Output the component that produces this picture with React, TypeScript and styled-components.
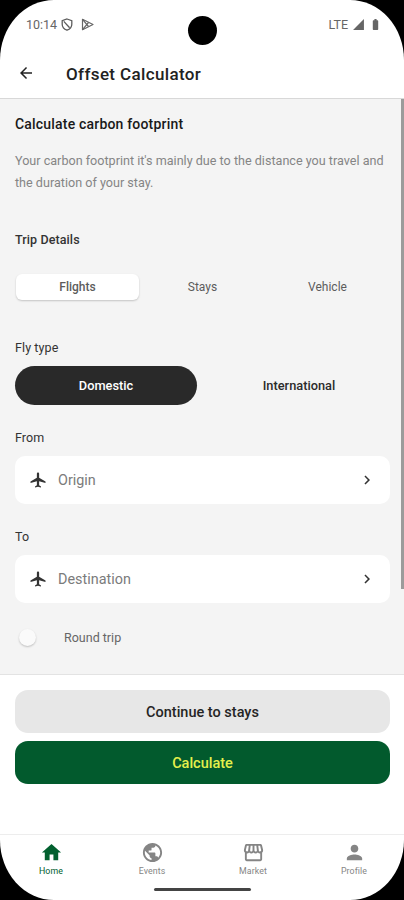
import React from 'react';
import styled, { createGlobalStyle, css } from 'styled-components';
import {
  MdArrowBack,
  MdBatteryFull,
  MdChevronRight,
  MdHome,
  MdLocalAirport,
  MdPerson,
  MdPublic,
  MdSignalCellular4Bar,
} from 'react-icons/md';

const GlobalStyle = createGlobalStyle`
  * { box-sizing: border-box; }
  body { margin: 0; background: #000; font-family: Roboto, "Liberation Sans", sans-serif; }
  button { font-family: inherit; border: 0; padding: 0; background: none; color: inherit; }
  svg { display: block; flex: none; }
`;

const Phone = styled.div`
  position: relative;
  width: 404px;
  height: 900px;
  display: flex;
  flex-direction: column;
  overflow: hidden;
  background: #fff;
  border-radius: 54px / 60px;
`;

const StatusBar = styled.div`
  height: 48px;
  flex: none;
  display: flex;
  justify-content: space-between;
  padding: 17px 22px 0 26px;
  color: #666;
  font-size: 12.5px;
  line-height: 15px;
`;

const StatusGroup = styled.div<{ $gap: number }>`
  display: flex;
  height: 15px;
  align-items: center;
  gap: ${(p) => p.$gap}px;
`;

const Camera = styled.div`
  position: absolute;
  left: 188px;
  top: 16px;
  width: 29px;
  height: 29px;
  border-radius: 50%;
  background: #000;
`;

const Header = styled.header`
  height: 51px;
  flex: none;
  display: flex;
  align-items: center;
  padding: 0 0 0 17px;
  border-bottom: 1px solid #d8d8d8;
  color: #222;
`;

const Title = styled.h1`
  margin: 2px 0 0 31px;
  font-size: 17px;
  font-weight: 500;
  line-height: 20px;
  letter-spacing: 0.36px;
`;

const Content = styled.main`
  position: relative;
  height: 576px;
  flex: none;
  padding: 16px 14px 0 15px;
  background: #f4f4f4;
  border-bottom: 1px solid #e3e3e3;
`;

const ScrollThumb = styled.div`
  position: absolute;
  right: 0;
  top: 0;
  width: 3px;
  height: 490px;
  background: #9b9b9b;
`;

const Heading = styled.h2`
  margin: 0;
  font-size: 14px;
  font-weight: 500;
  line-height: 18px;
  letter-spacing: 0.19px;
  color: #191919;
`;

const Intro = styled.p`
  margin: 17px 0 0;
  font-size: 12.6px;
  line-height: 22px;
  color: #858585;
  white-space: nowrap;
`;

const Label = styled.h3<{ $top: number; $medium?: boolean }>`
  margin: ${(p) => p.$top}px 0 0;
  font-size: 12.5px;
  font-weight: ${(p) => (p.$medium ? 500 : 400)};
  line-height: 16px;
  letter-spacing: 0.1px;
  color: #333;
`;

const Tabs = styled.div`
  display: grid;
  grid-template-columns: repeat(3, 1fr);
  margin-top: 26px;
  height: 26px;
`;

const Tab = styled.button<{ $active?: boolean }>`
  margin: 0 1px;
  font-size: 12px;
  font-weight: ${(p) => (p.$active ? 500 : 400)};
  color: #5c5c5c;
  border-radius: 6px;
  ${(p) =>
    p.$active &&
    css`
      background: #fff;
      box-shadow: 0 1px 2px rgba(0, 0, 0, 0.2);
    `}
`;

const Segments = styled.div`
  display: grid;
  grid-template-columns: 182px 182px;
  justify-content: space-between;
  margin-top: 10px;
  height: 39px;
`;

const Segment = styled.button<{ $active?: boolean }>`
  border-radius: 20px;
  font-size: 12.8px;
  font-weight: 500;
  color: ${(p) => (p.$active ? '#fff' : '#2b2b2b')};
  background: ${(p) => (p.$active ? '#292929' : 'transparent')};
`;

const Picker = styled.div`
  display: flex;
  align-items: center;
  height: 48px;
  margin-top: 10px;
  padding: 0 14px;
  border-radius: 10px;
  background: #fff;
  color: #333;
`;

const Placeholder = styled.span`
  flex: 1;
  margin-left: 11px;
  font-size: 14.4px;
  color: #7b7b7b;
`;

const ToggleRow = styled.div`
  display: flex;
  align-items: center;
  height: 20px;
  margin-top: 24px;
  font-size: 12.5px;
  color: #666;
`;

const Knob = styled.span`
  width: 17px;
  height: 17px;
  margin: 0 28px 0 4px;
  border-radius: 50%;
  background: #fafafa;
  box-shadow: 0 1px 2px rgba(0, 0, 0, 0.22);
`;

const Actions = styled.div`
  flex: 1;
  display: flex;
  flex-direction: column;
  gap: 8px;
  padding: 15px 14px 0 15px;
`;

const Action = styled.button<{ $primary?: boolean }>`
  height: 43px;
  padding-top: 2px;
  border-radius: 13px;
  font-size: 14.5px;
  font-weight: 500;
  color: ${(p) => (p.$primary ? '#e4f04c' : '#252525')};
  background: ${(p) => (p.$primary ? '#025a2d' : '#e7e7e7')};
`;

const NavBar = styled.nav`
  display: grid;
  grid-template-columns: repeat(4, 101px);
  height: 66px;
  flex: none;
  padding-top: 6px;
  border-top: 1px solid #ededed;
`;

const NavItem = styled.div<{ $active?: boolean }>`
  display: flex;
  flex-direction: column;
  align-items: center;
  gap: 2px;
  padding-left: 1px;
  font-size: 8.8px;
  line-height: 11px;
  letter-spacing: 0.1px;
  color: ${(p) => (p.$active ? '#02602f' : '#858585')};
`;

const HomeIndicator = styled.div`
  position: absolute;
  left: 154px;
  top: 888px;
  width: 97px;
  height: 3px;
  border-radius: 2px;
  background: #444;
`;

const ShieldIcon = () => (
  <svg width="12" height="13" viewBox="0 0 12 13" fill="none" stroke="#5c5c5c" strokeWidth="1.3">
    <path d="M6 1 10.8 2.6v3.6c0 3-2 5-4.8 6-2.8-1-4.8-3-4.8-6V2.6Z" />
    <path d="m2.8 3.4 5.8 6.4" />
  </svg>
);

const PlayIcon = () => (
  <svg width="13" height="13" viewBox="0 0 13 13" fill="none" stroke="#666" strokeWidth="1.2" strokeLinejoin="round">
    <path d="M1.5 1.3v10.4L12 6.5Z" />
    <path d="m1.5 1.3 6 7.2M1.5 11.7l6-7.2" />
  </svg>
);

const StorefrontIcon = () => (
  <svg width="23" height="23" viewBox="0 0 24 24" fill="currentColor">
    <path d="M5.06 3C4.63 3 4.22 3.14 3.84 3.42S3.24 4.06 3.14 4.5L2.11 8.91C1.86 10 2.06 10.92 2.69 11.73 2.81 11.85 2.93 11.97 3.04 12.07V19C3.04 20.1 3.94 21 5 21H19C20.1 21 21 20.1 21 19V12.07C21.2 11.92 21.28 11.81 21.34 11.73 21.97 10.92 22.17 10 21.92 8.91L20.86 4.5C20.73 4.06 20.5 3.7 20.13 3.42 19.77 3.14 19.38 3 18.94 3ZM18.89 4.97 19.97 9.38C20.06 9.81 19.97 10.2 19.69 10.55 19.44 10.86 19.13 11 18.75 11 18.44 11 18.17 10.9 17.95 10.66 17.73 10.43 17.61 10.16 17.58 9.84L16.97 5ZM5.06 5H7.03L6.42 9.84C6.3 10.63 5.91 11 5.25 11 4.84 11 4.53 10.86 4.31 10.55 4.03 10.2 3.94 9.81 4.03 9.38ZM9.05 5H11V9.7C11 10.05 10.89 10.35 10.64 10.62 10.39 10.88 10.08 11 9.7 11 9.36 11 9.07 10.88 8.84 10.59S8.5 10 8.5 9.66V9.5ZM13 5H14.95L15.5 9.5C15.58 9.92 15.5 10.27 15.21 10.57 14.95 10.87 14.61 11 14.2 11 13.89 11 13.61 10.88 13.36 10.62 13.11 10.35 13 10.05 13 9.7ZM7.45 12.05C8.08 12.65 8.86 13 9.7 13 10.55 13 11.33 12.65 11.95 12.05 12.58 12.65 13.36 13 14.2 13 15.08 13 15.86 12.65 16.5 12.05 17.11 12.65 17.86 13 18.75 13H19.03V19H5V13H5.25C6.09 13 6.84 12.65 7.45 12.05Z" />
  </svg>
);

export default function App() {
  return (
    <>
      <GlobalStyle />
      <Phone>
        <StatusBar>
          <StatusGroup $gap={8}>
            <StatusGroup $gap={4}>
              <span>10:14</span>
              <ShieldIcon />
            </StatusGroup>
            <PlayIcon />
          </StatusGroup>
          <StatusGroup $gap={4}>
            <span>LTE</span>
            <MdSignalCellular4Bar size={13} />
            <MdBatteryFull size={13} />
          </StatusGroup>
        </StatusBar>
        <Camera />
        <Header>
          <MdArrowBack size={18} />
          <Title>Offset Calculator</Title>
        </Header>
        <Content>
          <Heading>Calculate carbon footprint</Heading>
          <Intro>
            Your carbon footprint it's mainly due to the distance you travel and
            <br />
            the duration of your stay.
          </Intro>
          <Label $top={38} $medium>Trip Details</Label>
          <Tabs>
            <Tab $active>Flights</Tab>
            <Tab>Stays</Tab>
            <Tab>Vehicle</Tab>
          </Tabs>
          <Label $top={40}>Fly type</Label>
          <Segments>
            <Segment $active>Domestic</Segment>
            <Segment>International</Segment>
          </Segments>
          <Label $top={25}>From</Label>
          <Picker>
            <MdLocalAirport size={18} />
            <Placeholder>Origin</Placeholder>
            <MdChevronRight size={18} />
          </Picker>
          <Label $top={25}>To</Label>
          <Picker>
            <MdLocalAirport size={18} />
            <Placeholder>Destination</Placeholder>
            <MdChevronRight size={18} />
          </Picker>
          <ToggleRow>
            <Knob />
            Round trip
          </ToggleRow>
          <ScrollThumb />
        </Content>
        <Actions>
          <Action>Continue to stays</Action>
          <Action $primary>Calculate</Action>
        </Actions>
        <NavBar>
          <NavItem $active>
            <MdHome size={23} />
            Home
          </NavItem>
          <NavItem>
            <MdPublic size={23} />
            Events
          </NavItem>
          <NavItem>
            <StorefrontIcon />
            Market
          </NavItem>
          <NavItem>
            <MdPerson size={23} />
            Profile
          </NavItem>
        </NavBar>
        <HomeIndicator />
      </Phone>
    </>
  );
}
